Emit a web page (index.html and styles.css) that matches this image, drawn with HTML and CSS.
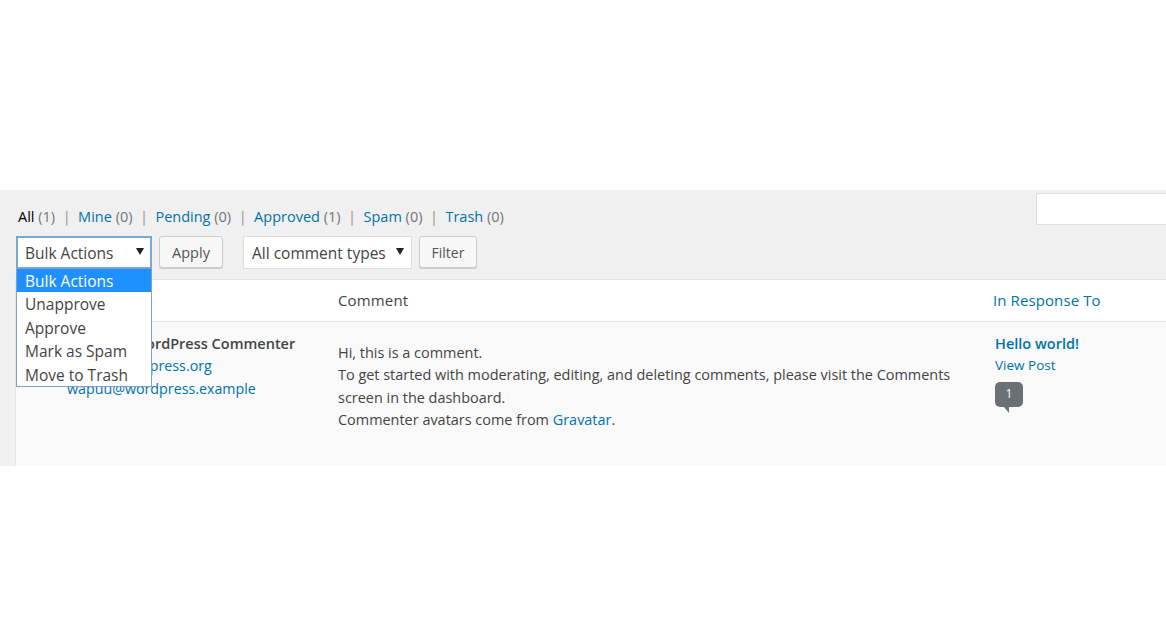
FILE: index.html
```html
<!DOCTYPE html>
<html lang="en">
<head>
<meta charset="utf-8">
<title>Comments</title>
<link rel="stylesheet" href="styles.css">
</head>
<body>
<main class="panel">
  <div class="top-row">
    <ul class="views">
      <li><span class="current">All</span> <span class="count">(1)</span></li>
      <li class="sep">|</li>
      <li><a href="#">Mine</a> <span class="count">(0)</span></li>
      <li class="sep">|</li>
      <li><a href="#">Pending</a> <span class="count">(0)</span></li>
      <li class="sep">|</li>
      <li><a href="#">Approved</a> <span class="count">(1)</span></li>
      <li class="sep">|</li>
      <li><a href="#">Spam</a> <span class="count">(0)</span></li>
      <li class="sep">|</li>
      <li><a href="#">Trash</a> <span class="count">(0)</span></li>
    </ul>
    <div class="search"></div>
  </div>
  <div class="tablenav">
    <div class="bulk">
      <div class="select select-open"><span>Bulk Actions</span><i class="caret"></i></div>
      <ul class="menu">
        <li class="menu-active">Bulk Actions</li>
        <li>Unapprove</li>
        <li>Approve</li>
        <li>Mark as Spam</li>
        <li>Move to Trash</li>
      </ul>
    </div>
    <button class="btn btn-apply">Apply</button>
    <div class="select select-types"><span>All comment types</span><i class="caret"></i></div>
    <button class="btn btn-filter">Filter</button>
  </div>
  <section class="table">
    <div class="thead">
      <div class="th th-author"></div>
      <div class="th th-comment">Comment</div>
      <div class="th th-response"><a href="#">In Response To</a></div>
    </div>
    <div class="row">
      <div class="cell-author">
        <strong>A WordPress Commenter</strong>
        <a href="#">https://wordpress.org</a>
        <a href="#">wapuu@wordpress.example</a>
      </div>
      <div class="cell-comment">
        <p>Hi, this is a comment.</p>
        <p>To get started with moderating, editing, and deleting comments, please visit the Comments<br>screen in the dashboard.</p>
        <p>Commenter avatars come from <a href="#">Gravatar</a>.</p>
      </div>
      <div class="cell-response">
        <a class="post-title" href="#">Hello world!</a>
        <a class="view-post" href="#">View Post</a>
        <span class="bubble">1</span>
      </div>
    </div>
  </section>
</main>
</body>
</html>
```
FILE: styles.css
```css
* { box-sizing: border-box; }
html, body { margin: 0; padding: 0; background: #fff; }
body {
  padding-top: 190px;
  height: 626px;
  overflow: hidden;
  font-family: "Open Sans", "Noto Sans", sans-serif;
  font-size: 14px;
  color: #444;
}
a { color: #0073aa; text-decoration: none; }
ul { list-style: none; margin: 0; padding: 0; }
p { margin: 0; }

.panel {
  height: 276px;
  background: #f0f0f0;
  overflow: hidden;
}

.top-row {
  height: 46px;
  display: flex;
  justify-content: space-between;
  align-items: flex-start;
  padding-left: 18px;
}
.views {
  display: flex;
  gap: 7.5px;
  margin-top: 17px;
  font-size: 14.5px;
  line-height: 20px;
}
.current { color: #000; font-weight: 400; }
.count { color: #72777c; }
.sep { color: #8f9499; }
.search {
  width: 130px;
  height: 32px;
  margin-top: 3px;
  flex: none;
  background: #fff;
  border: 1px solid #ddd;
  border-right: 0;
}

.tablenav {
  height: 43px;
  display: flex;
  align-items: flex-start;
  padding-left: 16px;
}
.bulk { position: relative; width: 136px; flex: none; }
.select {
  height: 33px;
  display: flex;
  align-items: center;
  justify-content: space-between;
  background: #fff;
  border: 1px solid #ddd;
  padding: 1px 7px 0 8px;
  font-size: 15.5px;
  color: #444;
}
.select-open {
  border: 2px solid #7aa7d6;
  padding-left: 7px;
  padding-right: 6px;
}
.select-types { width: 169px; margin-left: 20px; }
.caret {
  width: 0;
  height: 0;
  border-left: 4px solid transparent;
  border-right: 4px solid transparent;
  border-top: 7px solid #222;
  margin-bottom: 3px;
}
.menu {
  position: absolute;
  top: 32px;
  left: 0;
  width: 136px;
  height: 119px;
  background: #fff;
  border: 1px solid #7e9fd6;
  font-size: 15.5px;
  color: #444;
  z-index: 2;
}
.menu li {
  height: 23.4px;
  line-height: 25px;
  padding-left: 8px;
}
.menu .menu-active { background: #1e90ff; color: #fff; }

.btn {
  height: 32px;
  margin: 0;
  padding: 0;
  font: inherit;
  color: #555;
  background: #f7f7f7;
  border: 1px solid #ccc;
  border-radius: 3px;
  box-shadow: 0 1px 0 #ccc;
}
.btn-apply { width: 64px; margin-left: 7px; font-size: 14.5px; }
.btn-filter { width: 58px; margin-left: 7px; font-size: 14px; }

.table {
  margin-left: 15px;
  height: 187px;
  border-left: 1px solid #e5e5e5;
}
.thead {
  height: 43px;
  display: grid;
  grid-template-columns: 322px 655px 1fr;
  align-items: center;
  padding-bottom: 2px;
  background: #fff;
  border-top: 1px solid #e1e1e1;
  border-bottom: 1px solid #e1e1e1;
  font-size: 15px;
  letter-spacing: 0.15px;
}
.th-response { letter-spacing: 0.1px; }
.row {
  height: 144px;
  display: grid;
  grid-template-columns: 322px 657px 1fr;
  background: #f9f9f9;
}
.cell-author {
  display: flex;
  flex-direction: column;
  align-items: flex-start;
  padding: 11px 0 0 51px;
  line-height: 22.3px;
  font-size: 14.25px;
}
.cell-author strong { font-weight: 600; color: #444; padding-left: 52px; font-size: 14.5px; }
.cell-comment {
  padding-top: 20px;
  line-height: 22.3px;
  font-size: 14.45px;
}
.cell-response {
  display: flex;
  flex-direction: column;
  align-items: flex-start;
  padding-top: 11px;
}
.post-title { font-weight: 600; line-height: 22px; font-size: 14.5px; }
.view-post { font-size: 13.5px; line-height: 21px; }
.bubble {
  position: relative;
  width: 28px;
  height: 25px;
  margin-top: 6px;
  background: #6b7077;
  color: #fff;
  border-radius: 5px;
  font-size: 12px;
  line-height: 23px;
  text-align: center;
}
.bubble::after {
  content: "";
  position: absolute;
  left: 9px;
  top: 25px;
  border-top: 6px solid #6b7077;
  border-left: 5px solid transparent;
}
```
